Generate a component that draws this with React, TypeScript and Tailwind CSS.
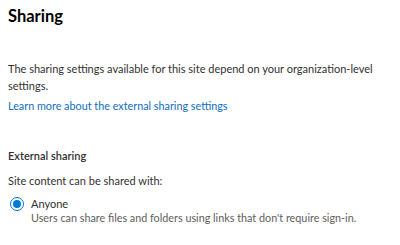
export default function App() {
  return (
    <div className="w-[400px] h-[245px] bg-white px-2 pt-[4px] text-[#323130]" style={{ fontFamily: 'Lato, "Noto Sans", sans-serif' }}>
      <h1 className="text-[16.5px] font-bold leading-[24px] text-black">Sharing</h1>
      <p className="mt-[32px] text-[11px] leading-[17px]">
        The sharing settings available for this site depend on your organization-level settings.
      </p>
      <a className="mt-[3px] block text-[10.8px] leading-[17px] text-[#106ebe]">
        Learn more about the external sharing settings
      </a>
      <h2 className="mt-[33px] text-[11px] font-semibold leading-[17px]">External sharing</h2>
      <p className="mt-[8px] text-[11px] leading-[17px]">Site content can be shared with:</p>
      <div className="mt-[8px] flex gap-[7px] pl-[2px]">
        <div className="flex h-[14px] w-[14px] shrink-0 items-center justify-center rounded-full border border-[#0078d4]">
          <div className="h-[8px] w-[8px] rounded-full bg-[#0078d4]" />
        </div>
        <div>
          <div className="text-[11px] leading-[14px]">Anyone</div>
          <div className="text-[10.8px] leading-[14px] text-[#605e5c]">
            Users can share files and folders using links that don't require sign-in.
          </div>
        </div>
      </div>
    </div>
  );
}
